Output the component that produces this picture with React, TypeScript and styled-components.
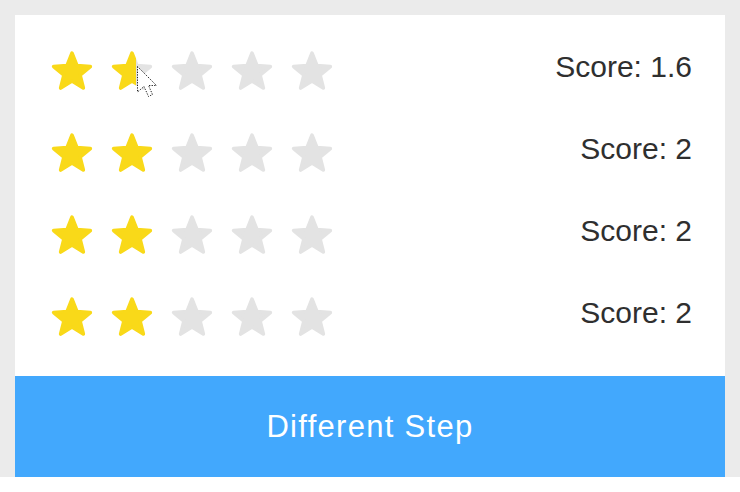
import React from "react";
import styled, { createGlobalStyle } from "styled-components";

const Global = createGlobalStyle`
  html, body { margin: 0; padding: 0; background: #ffffff; }
  body { font-family: "Liberation Sans", Arial, sans-serif; }
`;

const Backdrop = styled.div`
  background: #ebebeb;
  padding: 15px 15px 0 15px;
  width: 740px;
  box-sizing: border-box;
`;

const Card = styled.div`
  position: relative;
  background: #ffffff;
  width: 710px;
  display: flex;
  flex-direction: column;
`;

const List = styled.div`
  display: flex;
  flex-direction: column;
  padding: 15px 33px 18px 35px;
`;

const Row = styled.div`
  height: 82px;
  display: flex;
  align-items: center;
  justify-content: space-between;
`;

const Stars = styled.div`
  display: flex;
  gap: 16px;
  align-items: center;
`;

const Score = styled.span`
  font-size: 30px;
  color: #2f2f2f;
  padding-bottom: 8px;
`;

const Button = styled.button`
  border: none;
  margin: 0;
  padding: 0;
  height: 101px;
  width: 100%;
  background: #42a8fd;
  color: #ffffff;
  font-family: "Liberation Sans", Arial, sans-serif;
  font-size: 31px;
  letter-spacing: 1.3px;
  cursor: pointer;
`;

const Pointer = styled.svg`
  position: absolute;
  left: 121px;
  top: 50px;
  pointer-events: none;
`;

const STAR_POINTS =
  "12,2.3 14.7,9.08 21.99,9.56 16.37,14.22 18.17,21.29 12,17.4 5.83,21.29 7.63,14.22 2.01,9.56 9.3,9.08";

const YELLOW = "#f9d919";
const GRAY = "#e3e3e3";

function Star({ fill, id }: { fill: number; id: string }) {
  const f = Math.max(0, Math.min(1, fill));
  const partial = f > 0 && f < 1;
  const paint = partial ? `url(#${id})` : f >= 1 ? YELLOW : GRAY;
  const pct = `${f * 100}%`;
  return (
    <svg width="44" height="44" viewBox="0 0 24 24">
      {partial && (
        <defs>
          <linearGradient id={id} x1="0" x2="1" y1="0" y2="0">
            <stop offset={pct} stopColor={YELLOW} />
            <stop offset={pct} stopColor={GRAY} />
          </linearGradient>
        </defs>
      )}
      <polygon
        points={STAR_POINTS}
        fill={paint}
        stroke={paint}
        strokeWidth={2}
        strokeLinejoin="round"
      />
    </svg>
  );
}

function Rating({ value, row }: { value: number; row: number }) {
  return (
    <Stars>
      {[0, 1, 2, 3, 4].map((i) => (
        <Star key={i} id={`g-${row}-${i}`} fill={value - i} />
      ))}
    </Stars>
  );
}

const scores = [1.6, 2, 2, 2];

export default function App() {
  return (
    <>
      <Global />
      <Backdrop>
        <Card>
          <List>
            {scores.map((s, r) => (
              <Row key={r}>
                <Rating value={s} row={r} />
                <Score>Score: {s}</Score>
              </Row>
            ))}
          </List>
          <Button>Different Step</Button>
          <Pointer width="23" height="34" viewBox="0 0 23 34">
            <path
              d="M1.5 1.5 L1.5 27 L8 21.5 L12.5 31.5 L16.5 29.5 L12.5 20.5 L20.5 20.5 Z"
              fill="#ffffff"
              stroke="#222"
              strokeWidth="1"
              strokeDasharray="1.3 1.3"
              strokeLinejoin="round"
            />
          </Pointer>
        </Card>
      </Backdrop>
    </>
  );
}
